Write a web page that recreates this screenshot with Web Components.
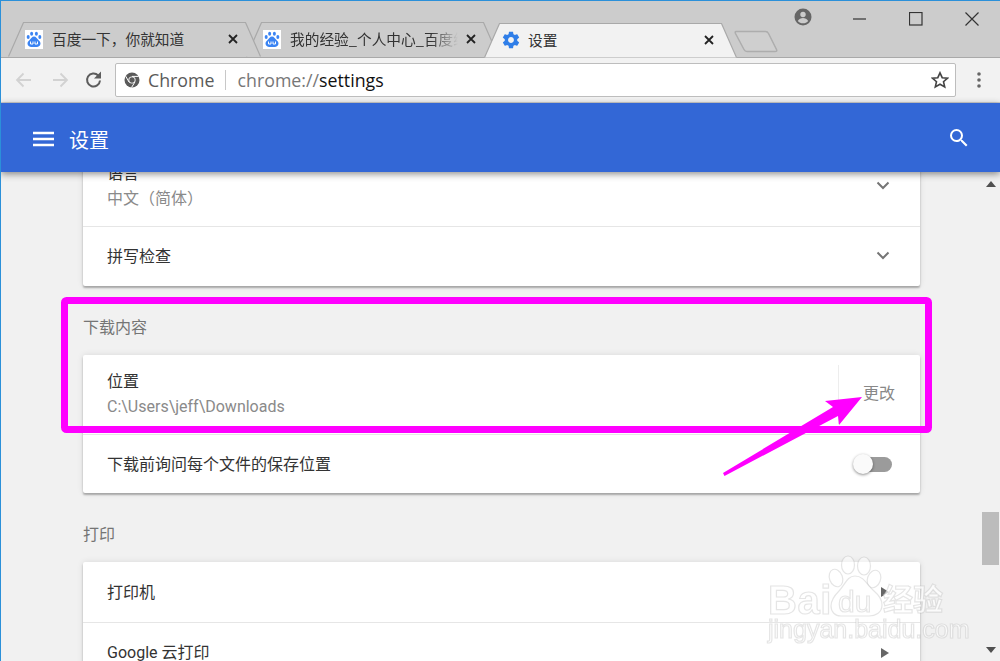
<!DOCTYPE html>
<html lang="zh">
<head>
<meta charset="utf-8">
<title>设置</title>
<style>
    html, body { margin: 0; height: 100%; overflow: hidden; }
    body { font-family: Roboto, "Noto Sans CJK SC", sans-serif; }
</style>
</head>
<body>
<browser-window>
    <tab-strip>
        <browser-tab icon="baidu">百度一下，你就知道</browser-tab>
        <browser-tab icon="baidu" fade style="z-index:1">我的经验_个人中心_百度经验</browser-tab>
        <browser-tab icon="gear" active style="z-index:3">设置</browser-tab>
    </tab-strip>
    <browser-toolbar></browser-toolbar>
    <settings-header></settings-header>
    <settings-page>
        <settings-card style="margin-top:-25px">
            <settings-row label="语言" sub="中文（简体）" end="chevron"></settings-row>
            <settings-row label="拼写检查" end="chevron"></settings-row>
        </settings-card>
        <settings-section>下载内容</settings-section>
        <settings-card>
            <settings-row label="位置" sub="C:\Users\jeff\Downloads" end="change"></settings-row>
            <settings-row label="下载前询问每个文件的保存位置" end="toggle" style="height:59px"></settings-row>
        </settings-card>
        <settings-section>打印</settings-section>
        <settings-card>
            <settings-row label="打印机" end="arrow"></settings-row>
            <settings-row label="Google 云打印" end="arrow"></settings-row>
        </settings-card>
    </settings-page>
    <screen-annotation></screen-annotation>
    <baidu-watermark></baidu-watermark>
</browser-window>

<script>
const GEAR = 'M19.43 12.98c.04-.32.07-.64.07-.98s-.03-.66-.07-.98l2.11-1.65c.19-.15.24-.42.12-.64l-2-3.46c-.12-.22-.39-.3-.61-.22l-2.49 1c-.52-.4-1.08-.73-1.69-.98l-.38-2.65C14.46 2.18 14.25 2 14 2h-4c-.25 0-.46.18-.49.42l-.38 2.65c-.61.25-1.17.59-1.69.98l-2.49-1c-.23-.09-.49 0-.61.22l-2 3.46c-.13.22-.07.49.12.64l2.11 1.65c-.04.32-.07.65-.07.98s.03.66.07.98l-2.11 1.65c-.19.15-.24.42-.12.64l2 3.46c.12.22.39.3.61.22l2.49-1c.52.4 1.08.73 1.69.98l.38 2.65c.03.24.24.42.49.42h4c.25 0 .46-.18.49-.42l.38-2.65c.61-.25 1.17-.59 1.69-.98l2.49 1c.23.09.49 0 .61-.22l2-3.46c.12-.22.07-.49-.12-.64l-2.11-1.65zM12 15.5c-1.93 0-3.5-1.57-3.5-3.5s1.57-3.5 3.5-3.5 3.5 1.57 3.5 3.5-1.57 3.5-3.5 3.5z';

// Base class: subclasses only give back their shadow markup
class ShadowElement extends HTMLElement {
    connectedCallback() {
        this.attachShadow({ mode: 'open' });
        this.shadowRoot.innerHTML = this.render();
    }
}

class BrowserWindow extends ShadowElement {
    render() {
        return `
            <style>
                :host {
                    display: flex;
                    flex-direction: column;
                    position: relative;
                    width: 1000px;
                    height: 661px;
                    box-sizing: border-box;
                    border-top: 1px solid #2b90d9;
                    border-left: 1px solid #2b90d9;
                    background: #f1f1f1;
                    overflow: hidden;
                }
            </style>
            <slot></slot>
        `;
    }
}

class TabStrip extends ShadowElement {
    render() {
        return `
            <style>
                :host {
                    display: flex;
                    flex: none;
                    height: 57px;
                    box-sizing: border-box;
                    padding-left: 7px;
                    background: #cccccc;
                    border-bottom: 1px solid #a9a9a9;
                    position: relative;
                }
                .tabs { display: flex; align-items: flex-end; }
                .new-tab { display: block; margin: 0 0 4px -3px; }
                .controls { display: flex; margin-left: auto; align-self: flex-start; }
                .account { display: block; margin: 7px 20px 0 0; }
                .btn { width: 56px; height: 36px; display: flex; align-items: center; justify-content: center; }
                .btn svg { display: block; }
            </style>
            <div class="tabs">
                <slot></slot>
                <svg class="new-tab" width="44" height="23" viewBox="0 0 44 23">
                    <path d="M2 1.5h29.5q2 0 3 2l8 16q1 2-1.500 2H13q-2 0-3-2l-8.500-16q-.8-2 .5-2z" fill="#cfcfcf" stroke="#adadad" stroke-width="1.500"/>
                </svg>
            </div>
            <div class="controls">
                <svg class="account" width="18" height="18" viewBox="0 0 18 18">
                    <circle cx="9" cy="9" r="8.500" fill="#666"/>
                    <circle cx="9" cy="6.500" r="2.700" fill="#ccc"/>
                    <path d="M3.800 13c1-2 3.200-3 5.200-3s4.200 1 5.200 3c-1.300 1.500-3.200 2.300-5.200 2.300S5.100 14.500 3.800 13z" fill="#ccc"/>
                </svg>
                <div class="btn"><svg width="14" height="14" viewBox="0 0 14 14"><path d="M0 7h13" stroke="#333" stroke-width="1.200"/></svg></div>
                <div class="btn"><svg width="14" height="14" viewBox="0 0 14 14"><rect x=".5" y=".5" width="12.500" height="12.500" fill="none" stroke="#333" stroke-width="1.200"/></svg></div>
                <div class="btn"><svg width="14" height="14" viewBox="0 0 14 14"><path d="M.5.5l13 13M13.500.5l-13 13" stroke="#333" stroke-width="1.200"/></svg></div>
            </div>
        `;
    }
}

class BrowserTab extends ShadowElement {
    render() {
        const active = this.hasAttribute('active');
        const fade = this.hasAttribute('fade');
        const icon = this.getAttribute('icon') === 'gear'
            ? `<svg class="icon gear" width="20" height="20" viewBox="0 0 24 24"><path d="${GEAR}" fill="#2f7ee8"/></svg>`
            : `<svg class="icon" width="18" height="19" viewBox="0 0 18 19">
                   <rect width="18" height="19" fill="#fff"/>
                   <g fill="#3b84f3">
                       <ellipse cx="6.600" cy="3.800" rx="1.500" ry="2"/>
                       <ellipse cx="11.400" cy="3.800" rx="1.500" ry="2"/>
                       <ellipse cx="3.200" cy="7" rx="1.500" ry="1.900"/>
                       <ellipse cx="14.800" cy="7" rx="1.500" ry="1.900"/>
                       <path d="M9 6.500c2 0 3 2 4.200 3.200 1.300 1.200 2.300 2.200 2.300 3.900 0 2.400-2 3.400-3.800 3.400H6.300c-1.800 0-3.800-1-3.800-3.400 0-1.700 1-2.700 2.300-3.900C6 8.500 7 6.500 9 6.500z"/>
                   </g>
                   <path d="M5.500 11.500v2.500h2.500v-2.500M10 11.500v2.500h2.500v-2.500" fill="none" stroke="#fff" stroke-width="1"/>
               </svg>`;
        return `
            <style>
                :host {
                    display: block;
                    position: relative;
                    z-index: 2;
                    flex: none;
                    width: 253px;
                    height: 35px;
                    margin-left: -15px;
                    margin-bottom: ${active ? '-1px' : '0'};
                    font: 14.7px "Noto Sans CJK SC", sans-serif;
                    color: #333;
                }
                :host(:first-of-type) { margin-left: 0; }
                .shape { position: absolute; left: 0; top: 0; }
                .content {
                    position: relative;
                    height: 34px;
                    display: flex;
                    align-items: center;
                    padding: 0 23px 0 17px;
                }
                .icon { flex: none; display: block; }
                .gear { margin-left: 0; margin-right: -2px; }
                .title {
                    flex: 1;
                    margin-left: 9px;
                    white-space: nowrap;
                    overflow: hidden;
                    line-height: 20px;
                    ${fade ? '-webkit-mask-image: linear-gradient(to right, #000 84%, transparent 100%);' : ''}
                }
                .close { flex: none; display: block; margin-left: 8px; }
            </style>
            <svg class="shape" width="253" height="35" viewBox="0 0 253 35">
                <path d="M.5 34.500L15.500.5h222l15 34" fill="${active ? '#f2f2f2' : '#cccccc'}" stroke="#a9a9a9" stroke-width="1.200"/>
            </svg>
            <div class="content">
                ${icon}
                <span class="title"><slot></slot></span>
                <svg class="close" width="10" height="10" viewBox="0 0 10 10"><path d="M1 1l8 8M9 1l-8 8" stroke="#222" stroke-width="1.800"/></svg>
            </div>
        `;
    }
}

class BrowserToolbar extends ShadowElement {
    render() {
        return `
            <style>
                :host {
                    display: flex;
                    flex: none;
                    align-items: center;
                    height: 45px;
                    box-sizing: border-box;
                    padding: 0 0 0 5px;
                    background: #f2f2f2;
                    border-bottom: 1px solid #d0d0d0;
                }
                .btn { width: 36px; display: flex; justify-content: center; flex: none; }
                .btn svg { display: block; }
                .reload { margin-left: -2px; }
                .omnibox {
                    flex: 1;
                    height: 34px;
                    margin-left: 3px;
                    box-sizing: border-box;
                    background: #fff;
                    border: 1px solid #bdbdbd;
                    border-radius: 2px;
                    display: flex;
                    align-items: center;
                    padding: 0 6px 0 8px;
                    font: 17.8px "Open Sans", sans-serif;
                    color: #5a5a5a;
                    white-space: nowrap;
                }
                .sep { width: 1px; height: 20px; background: #c8c8c8; margin: 0 12px 0 10px; }
                .scheme { color: #777; }
                .path { color: #111; }
                .chrome { margin-right: 8px; display: block; }
                .star { margin-left: auto; display: block; }
                .menu { width: 44px; box-sizing: border-box; padding-left: 2px; display: flex; justify-content: center; flex: none; }
            </style>
            <div class="btn"><svg width="18" height="16" viewBox="0 0 18 16"><path d="M16 8H2M8.500 1.500L2 8l6.500 6.500" fill="none" stroke="#d2d2d2" stroke-width="1.800"/></svg></div>
            <div class="btn"><svg width="18" height="16" viewBox="0 0 18 16"><path d="M2 8h14M9.500 1.500L16 8l-6.500 6.500" fill="none" stroke="#d2d2d2" stroke-width="1.800"/></svg></div>
            <div class="btn reload"><svg width="20" height="20" viewBox="0 0 20 20"><path d="M16 10.500a6.500 6.500 0 1 1-1.800-5" fill="none" stroke="#5c5c5c" stroke-width="2"/><path d="M17 1.500v7h-7z" fill="#5c5c5c"/></svg></div>
            <div class="omnibox">
                <svg class="chrome" width="16" height="16" viewBox="0 0 16 16">
                    <circle cx="8" cy="8" r="7.500" fill="#5a5a5a"/>
                    <circle cx="8" cy="8" r="3.600" fill="#fff"/>
                    <circle cx="8" cy="8" r="2.700" fill="#5a5a5a"/>
                    <path d="M8 4.400h6.600M5 10l-3.300-5.800M10.800 10.200L7.500 15.500" stroke="#fff" stroke-width="1"/>
                </svg>
                <span>Chrome</span>
                <span class="sep"></span>
                <span class="scheme">chrome://</span><span class="path">settings</span>
                <svg class="star" width="18" height="18" viewBox="0 0 18 18"><path d="M9 1.800l2.200 4.900 5.300.5-4 3.500 1.200 5.200L9 13.200l-4.700 2.700 1.200-5.200-4-3.500 5.300-.5z" fill="none" stroke="#444" stroke-width="1.600"/></svg>
            </div>
            <div class="menu"><svg width="4" height="16" viewBox="0 0 4 16"><circle cx="2" cy="2" r="1.800" fill="#666"/><circle cx="2" cy="8" r="1.800" fill="#666"/><circle cx="2" cy="14" r="1.800" fill="#666"/></svg></div>
        `;
    }
}

class SettingsHeader extends ShadowElement {
    render() {
        return `
            <style>
                :host {
                    display: flex;
                    flex: none;
                    align-items: center;
                    position: relative;
                    z-index: 1;
                    height: 69px;
                    box-sizing: border-box;
                    padding: 3px 29px 0 32px;
                    background: #3367d6;
                    color: #fff;
                    box-shadow: 0 2px 7px rgba(0, 0, 0, 0.45);
                }
                svg { display: block; flex: none; }
                .title { margin-left: 15px; font: 20px "Noto Sans CJK SC", sans-serif; }
                .search { margin-left: auto; margin-top: -3px; }
            </style>
            <svg width="21" height="16" viewBox="0 0 21 16"><path d="M0 2h21M0 8h21M0 14h21" stroke="#fff" stroke-width="2.400"/></svg>
            <span class="title">设置</span>
            <svg class="search" width="24" height="24" viewBox="0 0 24 24"><path d="M15.500 14h-.79l-.28-.27A6.470 6.470 0 0 0 16 9.500 6.500 6.500 0 1 0 9.500 16c1.610 0 3.090-.59 4.230-1.570l.27.28v.79l5 4.990L20.490 19l-4.990-5zm-6 0C7.010 14 5 11.990 5 9.500S7.010 5 9.500 5 14 7.010 14 9.500 11.990 14 9.500 14z" fill="#fff"/></svg>
        `;
    }
}

class SettingsPage extends ShadowElement {
    render() {
        return `
            <style>
                :host {
                    display: flex;
                    flex: 1;
                    min-height: 0;
                    background: #f1f1f1;
                }
                .scroll { flex: 1; padding-left: 82px; overflow: hidden; }
                .column { width: 837px; }
                .bar {
                    flex: none;
                    width: 18px;
                    padding-right: 1px;
                    display: flex;
                    flex-direction: column;
                    align-items: center;
                    padding-top: 9px;
                    box-sizing: border-box;
                    position: relative;
                }
                .bar svg { display: block; }
                .thumb { width: 17px; height: 53px; margin-top: 325px; background: #bcbcbc; }
                .down { margin-top: 82px; }
            </style>
            <div class="scroll"><div class="column"><slot></slot></div></div>
            <div class="bar">
                <svg width="10" height="6" viewBox="0 0 10 6"><path d="M0 6L5 0l5 6z" fill="#505050"/></svg>
                <div class="thumb"></div>
                <svg class="down" width="10" height="6" viewBox="0 0 10 6"><path d="M0 0l5 6 5-6z" fill="#505050"/></svg>
            </div>
        `;
    }
}

class SettingsSection extends ShadowElement {
    render() {
        return `
            <style>
                :host {
                    display: block;
                    height: 69px;
                    box-sizing: border-box;
                    padding-top: 31px;
                    font: 16px/22px Roboto, "Noto Sans CJK SC", sans-serif;
                    color: #757575;
                }
            </style>
            <slot></slot>
        `;
    }
}

class SettingsCard extends ShadowElement {
    render() {
        return `
            <style>
                :host {
                    display: block;
                    background: #fff;
                    border-radius: 2px;
                    box-shadow: 0 2px 2px rgba(0, 0, 0, 0.28), 0 0 6px rgba(0, 0, 0, 0.1);
                }
            </style>
            <slot></slot>
        `;
    }
}

class SettingsRow extends ShadowElement {
    render() {
        const sub = this.getAttribute('sub');
        const end = this.getAttribute('end');
        const ends = {
            chevron: `<svg class="end chevron" width="14" height="9" viewBox="0 0 14 9"><path d="M1.500 1.500L7 7l5.500-5.500" fill="none" stroke="#757575" stroke-width="2"/></svg>`,
            arrow: `<svg class="end arrow" width="8" height="10" viewBox="0 0 8 10"><path d="M0 0l8 5-8 5z" fill="#666"/></svg>`,
            change: `<span class="divider"></span><span class="change">更改</span>`,
            toggle: `<span class="toggle"><span class="knob"></span></span>`
        };
        return `
            <style>
                :host {
                    display: flex;
                    align-items: center;
                    box-sizing: border-box;
                    height: ${sub ? '79px' : '60px'};
                    padding: 0 28px 0 24px;
                    font: 16px/25px Roboto, "Noto Sans CJK SC", sans-serif;
                    color: #333;
                }
                :host(:not(:first-child)) { border-top: 1px solid #e6e6e6; }
                .text { flex: 1; margin-top: ${sub ? '-2px' : '0'}; }
                .sub { color: #8a8a8a; }
                .end { display: block; flex: none; }
                .chevron { margin-right: 2px; margin-top: -2px; }
                .arrow { margin-right: 3px; }
                .divider { align-self: stretch; width: 1px; margin: 10px 24px 10px 0; background: #ededed; }
                .change { color: #888; margin-right: -3px; margin-top: -2px; }
                .toggle {
                    position: relative;
                    width: 30px;
                    height: 15px;
                    margin-right: 0;
                    border-radius: 8px;
                    background: #9b9b9b;
                }
                .knob {
                    position: absolute;
                    left: -9px;
                    top: -2.500px;
                    width: 20px;
                    height: 20px;
                    border-radius: 50%;
                    background: #fafafa;
                    box-shadow: 0 1px 3px rgba(0, 0, 0, 0.45);
                }
            </style>
            <div class="text">
                <div>${this.getAttribute('label')}</div>
                ${sub ? `<div class="sub">${sub}</div>` : ''}
            </div>
            ${ends[end] || ''}
        `;
    }
}

// Magenta box and arrow drawn on top of the screenshot
class ScreenAnnotation extends ShadowElement {
    render() {
        return `
            <style>
                :host { position: absolute; left: -1px; top: -1px; width: 1000px; height: 661px; z-index: 5; pointer-events: none; }
                svg { display: block; }
            </style>
            <svg width="1000" height="661" viewBox="0 0 1000 661">
                <rect x="64.500" y="300.500" width="864" height="129" rx="2" fill="none" stroke="#ff00ff" stroke-width="7"/>
                <path d="M862 397L825 401 833 407 723 473 724.500 476 838 416 839 425z" fill="#ff00ff"/>
            </svg>
        `;
    }
}

class BaiduWatermark extends ShadowElement {
    render() {
        return `
            <style>
                :host { position: absolute; left: 766px; top: 552px; width: 190px; height: 95px; z-index: 6; pointer-events: none; filter: blur(0.4px); }
                .mark {
                    position: absolute;
                    white-space: nowrap;
                    color: rgba(255, 255, 255, 0.7);
                    -webkit-text-stroke: 1.200px rgba(175, 175, 175, 0.32);
                }
                .bai { left: 1px; top: 23px; font: bold 40px/48px "Liberation Sans", sans-serif; letter-spacing: 0.500px; }
                .du { left: 71px; top: 32px; font: 30px/34px "Liberation Sans", sans-serif; }
                .jy { left: 116px; top: 24px; font: bold 30px/40px "Noto Sans CJK SC", sans-serif; }
                .url { left: 1px; top: 61px; font: 25px/30px "Liberation Sans", sans-serif; }
                svg { position: absolute; left: 0; top: 0; }
            </style>
            <svg width="190" height="70" viewBox="0 0 190 70">
                <g fill="rgba(255,255,255,0.5)" stroke="rgba(175,175,175,0.32)" stroke-width="1.200">
                    <ellipse cx="81" cy="12" rx="6.500" ry="9"/>
                    <ellipse cx="97" cy="13" rx="6.500" ry="9"/>
                    <ellipse cx="69" cy="25" rx="6.500" ry="9" transform="rotate(-20 69 25)"/>
                    <ellipse cx="107" cy="26" rx="6.500" ry="9" transform="rotate(20 107 26)"/>
                    <path d="M88 23c9 0 12 9 19 15 6 5 8 9 8 14 0 8-7 11-13 11H74c-6 0-10-4-10-10 0-6 3-10 8-15 6-6 8-15 16-15z"/>
                </g>
            </svg>
            <span class="mark bai">Bai</span>
            <span class="mark du">du</span>
            <span class="mark jy">经验</span>
            <span class="mark url">jingyan.baidu.com</span>
        `;
    }
}

customElements.define('browser-window', BrowserWindow);
customElements.define('tab-strip', TabStrip);
customElements.define('browser-tab', BrowserTab);
customElements.define('browser-toolbar', BrowserToolbar);
customElements.define('settings-header', SettingsHeader);
customElements.define('settings-page', SettingsPage);
customElements.define('settings-section', SettingsSection);
customElements.define('settings-card', SettingsCard);
customElements.define('settings-row', SettingsRow);
customElements.define('screen-annotation', ScreenAnnotation);
customElements.define('baidu-watermark', BaiduWatermark);
</script>
</body>
</html>
